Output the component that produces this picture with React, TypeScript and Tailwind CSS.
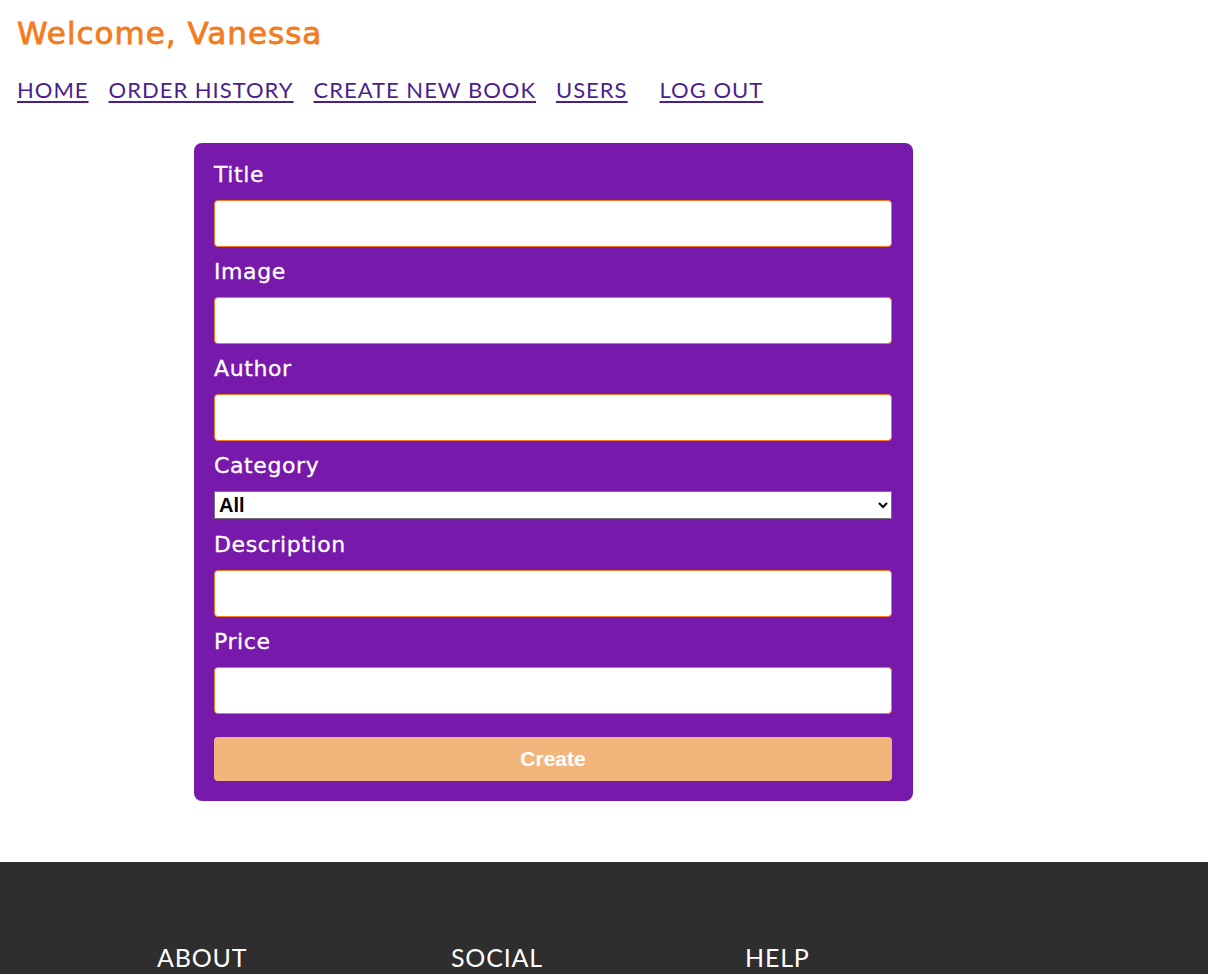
import React from "react";

const labelFont = { fontFamily: "'DejaVu Sans', 'Noto Sans', sans-serif", WebkitTextStroke: "0.3px #ffffff" };
const arial = { fontFamily: "'Liberation Sans', Arial, sans-serif" };

function Label({ children, top = 12 }: { children: React.ReactNode; top?: number }) {
  return (
    <label
      className={`text-[22px] leading-[26px] text-white mb-[12px] tracking-[0.6px] ${top === 13 ? "mt-[13px]" : "mt-[12px]"}`}
      style={labelFont}
    >
      {children}
    </label>
  );
}

function Field({ label, top }: { label: string; top?: number }) {
  return (
    <div className="flex flex-col">
      <Label top={top}>{label}</Label>
      <input className="w-full h-[47px] bg-white border border-[#f47b20] rounded-[4px] outline-none" />
    </div>
  );
}

export default function App() {
  return (
    <div className="min-h-[1300px] bg-white" style={{ fontFamily: "Lato, 'Noto Sans', sans-serif" }}>
      <div className="px-[17px]">
        <h1
          className="pt-[15px] text-[31px] leading-[36px] text-[#f47b20] tracking-[1px]"
          style={{ fontFamily: "'DejaVu Sans', 'Noto Sans', sans-serif", WebkitTextStroke: "0.8px #f47b20" }}
        >
          Welcome, Vanessa
        </h1>
        <nav className="mt-[26px] flex items-center text-[22px] leading-[26px] text-[#4b1f8a] tracking-[1px]">
          <a href="#" className="underline underline-offset-[3px]">HOME</a>
          <a href="#" className="underline underline-offset-[3px] ml-[20px]">ORDER HISTORY</a>
          <a href="#" className="underline underline-offset-[3px] ml-[20px]">CREATE NEW BOOK</a>
          <a href="#" className="underline underline-offset-[3px] ml-[20px]">USERS</a>
          <a href="#" className="underline underline-offset-[3px] ml-[32px]">LOG OUT</a>
        </nav>
        <form
          className="mt-[40px] ml-[177px] w-[719px] bg-[#7719aa] rounded-[8px] pl-[20px] pr-[21px] pt-[7px] pb-[20px]"
          onSubmit={(e) => e.preventDefault()}
        >
          <Field label="Title" />
          <Field label="Image" />
          <Field label="Author" />
          <div className="flex flex-col">
            <Label>Category</Label>
            <select
              className="w-full h-[28px] bg-white border border-[#767676] text-black font-bold text-[20px] leading-[24px]"
              style={arial}
            >
              <option>All</option>
            </select>
          </div>
          <Field label="Description" top={13} />
          <Field label="Price" />
          <button
            type="submit"
            className="mt-[23px] w-full h-[44px] bg-[#f2b67c] rounded-[4px] text-white font-bold text-[21px]"
            style={arial}
          >
            Create
          </button>
        </form>
      </div>
      <footer className="mt-[61px] bg-[#2e2e2e] h-[440px] pt-[80px]">
        <div className="flex pl-[157px] text-white text-[25px] leading-[30px] tracking-[0.8px]">
          <div className="w-[294px]">ABOUT</div>
          <div className="w-[294px]">SOCIAL</div>
          <div className="w-[294px]">HELP</div>
        </div>
      </footer>
    </div>
  );
}
